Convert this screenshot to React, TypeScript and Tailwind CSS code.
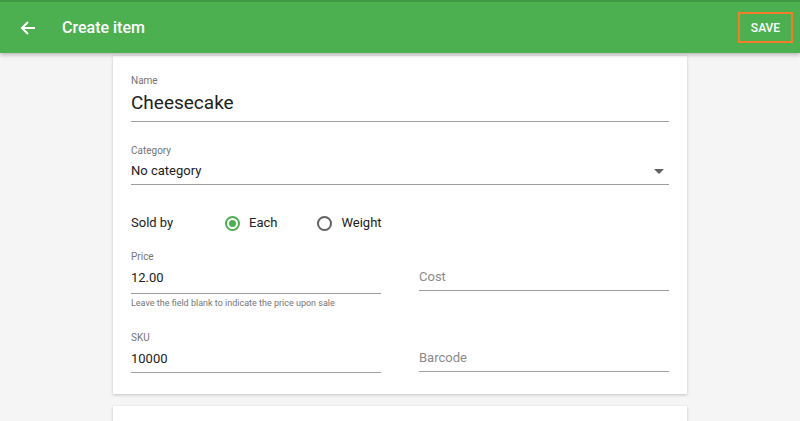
import React from "react";

function Field({ label, value, placeholder, helper, className = "", pb = "pb-[5px]" }: { label?: string; value?: string; placeholder?: string; helper?: string; className?: string; pb?: string }) {
  return (
    <div className={className}>
      {label ? <div className="text-[10px] leading-[12px] text-[#757575]">{label}</div> : <div className="h-[12px]" />}
      <div className={`mt-[7px] text-[13px] leading-[16px] ${pb} border-b border-[#9e9e9e] ${value ? "text-[#212121]" : "text-[#8a8a8a]"}`}>
        {value ?? placeholder}
      </div>
      {helper && <div className="mt-[4px] text-[9px] leading-[11px] text-[#757575]">{helper}</div>}
    </div>
  );
}

export default function App() {
  return (
    <div className="w-[800px] h-[421px] overflow-hidden bg-[#f5f5f5] relative" style={{ fontFamily: "Roboto, 'Noto Sans', sans-serif" }}>
      <header className="relative z-10 h-[53px] bg-[#4caf50] border-t-[2px] border-[#3f9a44] flex items-center shadow-[0_2px_4px_rgba(0,0,0,0.25)]">
        <svg className="ml-[20px]" width="16" height="16" viewBox="0 0 16 16" fill="none">
          <path d="M15 8H2M8 2L2 8l6 6" stroke="white" strokeWidth="2" />
        </svg>
        <div className="ml-[26px] text-[16px] font-medium text-white">Create item</div>
        <div className="ml-auto mr-[7px] w-[55px] h-[31px] border-[2px] border-[#f57c28] flex items-center justify-center text-[12px] font-medium text-white">SAVE</div>
      </header>
      <div className="w-[574px] mx-auto">
        <div className="mt-[3px] bg-white shadow-[0_1px_3px_rgba(0,0,0,0.2)] px-[18px] pt-[19px] pb-[21px]">
          <div className="text-[10px] leading-[12px] text-[#757575]">Name</div>
          <div className="mt-[5px] text-[19px] leading-[22px] text-[#212121] pb-[7px] border-b border-[#9e9e9e]">Cheesecake</div>

          <div className="mt-[23px] text-[10px] leading-[12px] text-[#757575]">Category</div>
          <div className="mt-[6px] flex items-center justify-between text-[13px] leading-[16px] text-[#212121] pb-[5px] border-b border-[#9e9e9e]">
            <span>No category</span>
            <svg className="mr-[5px]" width="10" height="5" viewBox="0 0 10 5"><path d="M0 0h10L5 5z" fill="#616161" /></svg>
          </div>

          <div className="mt-[24px] flex items-center text-[13px] text-[#212121] h-[28px]">
            <span className="w-[94px]">Sold by</span>
            <span className="flex items-center">
              <span className="w-[15px] h-[15px] rounded-full border-[2px] border-[#4caf50] flex items-center justify-center">
                <span className="w-[7px] h-[7px] rounded-full bg-[#4caf50]" />
              </span>
              <span className="ml-[9px]">Each</span>
            </span>
            <span className="flex items-center ml-[40px]">
              <span className="w-[15px] h-[15px] rounded-full border-[2px] border-[#616161]" />
              <span className="ml-[9px]">Weight</span>
            </span>
          </div>

          <div className="mt-[14px] grid grid-cols-[250px_250px] justify-between">
            <Field label="Price" value="12.00" pb="pb-[7px]" helper="Leave the field blank to indicate the price upon sale" />
            <Field placeholder="Cost" className="mt-[-1px]" />
          </div>

          <div className="mt-[23px] grid grid-cols-[250px_250px] justify-between">
            <Field label="SKU" value="10000" />
            <Field placeholder="Barcode" className="mt-[-1px]" />
          </div>
        </div>
        <div className="mt-[12px] bg-white shadow-[0_1px_3px_rgba(0,0,0,0.2)] h-[60px]" />
      </div>
    </div>
  );
}
